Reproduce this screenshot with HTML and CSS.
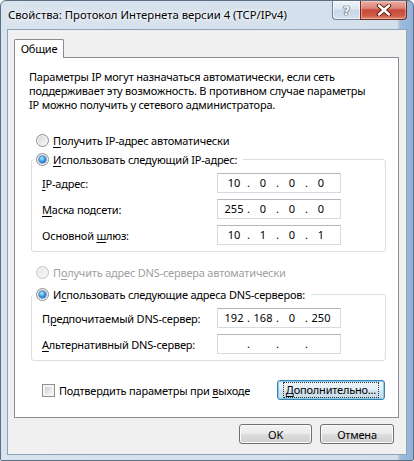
FILE: index.html
```html
<!DOCTYPE html>
<html lang="ru">
<head>
<meta charset="utf-8">
<title>Свойства: Протокол Интернета версии 4 (TCP/IPv4)</title>
<link rel="stylesheet" href="styles.css">
</head>
<body>
<div class="window">
  <div class="titlebar">
    <div class="title">Свойства: Протокол Интернета версии 4 (TCP/IPv4)</div>
    <div class="caption-buttons">
      <div class="cap-help">?</div>
      <div class="cap-close">
        <svg width="16" height="12" viewBox="0 0 16 12">
          <path d="M3 1.5 L13 10.5 M13 1.5 L3 10.5" stroke="#5a1d14" stroke-width="4.4" stroke-linecap="round"/>
          <path d="M3 1.5 L13 10.5 M13 1.5 L3 10.5" stroke="#ffffff" stroke-width="2.4" stroke-linecap="round"/>
        </svg>
      </div>
    </div>
  </div>
  <div class="client">
    <div class="tabs"><div class="tab">Общие</div></div>
    <div class="panel">
      <p class="intro">Параметры IP могут назначаться автоматически, если сеть<br>поддерживает эту возможность. В противном случае параметры<br>IP можно получить у сетевого администратора.</p>

      <div class="option">
        <span class="rb"></span><span><u>П</u>олучить IP-адрес автоматически</span>
      </div>

      <div class="group group-ip">
        <div class="legend">
          <span class="rb"><span class="rb-dot"></span></span><span><u>И</u>спользовать следующий IP-адрес:</span>
        </div>
        <div class="fields">
          <span class="flabel"><u>I</u>P-адрес:</span>
          <div class="ipbox"><span>10</span><span>.</span><span>0</span><span>.</span><span>0</span><span>.</span><span>0</span></div>
          <span class="flabel"><u>М</u>аска подсети:</span>
          <div class="ipbox"><span>255</span><span>.</span><span>0</span><span>.</span><span>0</span><span>.</span><span>0</span></div>
          <span class="flabel">Основной <u>ш</u>люз:</span>
          <div class="ipbox"><span>10</span><span>.</span><span>1</span><span>.</span><span>0</span><span>.</span><span>1</span></div>
        </div>
      </div>

      <div class="option option-dns disabled">
        <span class="rb"></span><span>П<u>о</u>лучить адрес DNS-сервера автоматически</span>
      </div>

      <div class="group group-dns">
        <div class="legend">
          <span class="rb"><span class="rb-dot"></span></span><span>И<u>с</u>пользовать следующие адреса DNS-серверов:</span>
        </div>
        <div class="fields">
          <span class="flabel">П<u>р</u>едпочитаемый DNS-сервер:</span>
          <div class="ipbox"><span>192</span><span>.</span><span>168</span><span>.</span><span>0</span><span>.</span><span>250</span></div>
          <span class="flabel"><u>А</u>льтернативный DNS-сервер:</span>
          <div class="ipbox"><span></span><span>.</span><span></span><span>.</span><span></span><span>.</span><span></span></div>
        </div>
      </div>

      <div class="panel-footer">
        <div class="check-row"><span class="cb"><span class="cb-in"></span></span><span>Подтвердить параметры при <u>в</u>ыходе</span></div>
        <div class="btn btn-focus btn-adv"><span class="focus-rect"><u>Д</u>ополнительно...</span></div>
      </div>
    </div>
    <div class="dialog-buttons">
      <div class="btn btn-ok">OK</div>
      <div class="btn btn-cancel">Отмена</div>
    </div>
  </div>
</div>
</body>
</html>
```
FILE: styles.css
```css
* { box-sizing: border-box; }

body {
  margin: 0;
  background: #ffffff;
  font-family: "Noto Sans", "Open Sans", sans-serif;
  font-size: 11px;
  letter-spacing: -0.2px;
  color: #000;
}

u { text-decoration: underline; text-underline-offset: 2px; }

.window {
  width: 414px;
  height: 461px;
  display: flex;
  flex-direction: column;
  padding: 0 6px 5px 6px;
  border: 1px solid #5c6e82;
  border-radius: 6px 6px 2px 2px;
  background: linear-gradient(90deg, #d9e3ee 0, #d3dfeb 396px, #9dbcdc 399px, #8fb2d8 412px);
}

.titlebar {
  height: 28px;
  display: flex;
  justify-content: space-between;
  align-items: flex-start;
}

.title {
  padding: 6px 0 0 1px;
  line-height: 16px;
  font-size: 11.3px;
  letter-spacing: 0;
  white-space: nowrap;
  color: #000;
  text-shadow: 0 0 6px #ffffff, 0 0 3px #ffffff;
}

.caption-buttons {
  display: flex;
  height: 19px;
}

.cap-help {
  width: 28px;
  height: 19px;
  border: 1px solid #71849a;
  border-top: none;
  border-right: none;
  border-radius: 0 0 0 4px;
  background: linear-gradient(#eef3f9 0%, #dde7f2 45%, #c9d7e6 50%, #d4e1ee 100%);
  box-shadow: inset 0 0 0 1px rgba(255,255,255,0.6);
  display: flex;
  align-items: center;
  justify-content: center;
  font-family: "DejaVu Sans", sans-serif;
  font-weight: bold;
  font-size: 13px;
  letter-spacing: 0;
  color: #f6f8fb;
  text-shadow: 0 0 1px #3e4d60, 0 0 1px #3e4d60, 0 0 1px #3e4d60;
}

.cap-close {
  width: 47px;
  height: 19px;
  border: 1px solid #6b2a22;
  border-top: none;
  border-radius: 0 0 4px 0;
  background: linear-gradient(#eab0a6 0%, #dc8476 40%, #c8493a 50%, #cf5a43 80%, #dd8a6f 100%);
  box-shadow: inset 0 0 0 1px rgba(255,220,210,0.45);
  display: flex;
  align-items: center;
  justify-content: center;
}

.client {
  flex: 1;
  border: 1px solid #8ea2b8;
  background: #f0f0f0;
  padding: 9px 6px 0 6px;
  display: flex;
  flex-direction: column;
}

.tabs {
  display: flex;
}

.tab {
  position: relative;
  z-index: 1;
  width: 50px;
  height: 19px;
  margin-bottom: -1px;
  border: 1px solid #898c95;
  border-bottom: none;
  border-radius: 2px 2px 0 0;
  background: #ffffff;
  text-align: center;
  line-height: 18px;
}

.panel {
  height: 361px;
  margin-right: 1px;
  border: 1px solid #898c95;
  background: #ffffff;
  display: flex;
  flex-direction: column;
}

.intro {
  margin: 12px 0 0 14px;
  line-height: 14px;
  white-space: nowrap;
}

.option {
  display: flex;
  align-items: center;
  gap: 4px;
  height: 14px;
  margin: 21px 0 0 21px;
  white-space: nowrap;
}

.option.disabled { color: #a0a0a0; }

.option-dns { margin-top: 13px; }

.rb {
  width: 13px;
  height: 13px;
  flex: none;
  border-radius: 50%;
  border: 1px solid #8e8f8f;
  background: linear-gradient(135deg, #cfcfcf 0%, #e8e8e8 50%, #fbfbfb 100%);
  box-shadow: inset 0 0 0 1px #f4f4f4;
  display: flex;
  align-items: center;
  justify-content: center;
}

.disabled .rb {
  border-color: #c4c4c4;
  background: linear-gradient(135deg, #e6e6e6, #f7f7f7);
}

.rb-dot {
  width: 7px;
  height: 7px;
  border-radius: 50%;
  background: radial-gradient(circle at 40% 35%, #b5ecff 0%, #3e9ee8 45%, #10479c 100%);
  box-shadow: 0 0 0 0.5px #1a4f9a;
}

.group {
  margin: 12px 12px 0 16px;
  border: 1px solid #d5dfe5;
  border-radius: 3px;
  padding: 0 0 6px 10px;
}

.group-dns { margin-top: 15px; }

.legend {
  display: flex;
  align-items: center;
  gap: 4px;
  width: fit-content;
  height: 14px;
  margin: -8px 0 0 -9px;
  padding: 0 6px 0 3px;
  background: #ffffff;
  white-space: nowrap;
}

.fields {
  display: grid;
  grid-template-columns: 175px 124px;
  grid-auto-rows: 20px;
  row-gap: 6px;
  margin-top: 7px;
  align-items: center;
}

.flabel { white-space: nowrap; }

.ipbox {
  height: 20px;
  border: 1px solid #d7dadf;
  border-top-color: #b3b6bc;
  background: #fff;
  display: grid;
  grid-template-columns: 24px 5px 24px 5px 24px 5px 24px;
  padding-left: 4px;
  align-items: center;
  text-align: center;
  line-height: 16px;
  letter-spacing: 0;
}

.panel-footer {
  display: flex;
  align-items: center;
  justify-content: space-between;
  margin: 19px 13px 0 27px;
  height: 20px;
}

.check-row {
  display: flex;
  align-items: center;
  gap: 4px;
  white-space: nowrap;
}

.cb {
  width: 13px;
  height: 13px;
  border: 1px solid #8e8f8f;
  background: #f4f4f4;
  padding: 2px;
  display: flex;
}

.cb-in {
  flex: 1;
  background: linear-gradient(135deg, #cbcfd5 0%, #e3e5e8 55%, #f6f6f6 100%);
}

.btn {
  height: 20px;
  border: 1px solid #707070;
  border-radius: 3px;
  background: linear-gradient(#f2f2f2 0%, #ebebeb 49%, #dddddd 51%, #cfcfcf 100%);
  box-shadow: inset 0 0 0 1px #fbfbfb;
  display: flex;
  align-items: center;
  justify-content: center;
  white-space: nowrap;
}

.btn-adv { width: 108px; }

.btn-focus {
  border-color: #3c7fb1;
  background: linear-gradient(#eef5f9 0%, #e3eef5 49%, #d5e4ee 51%, #c9dbe7 100%);
  box-shadow: inset 0 0 0 1px #7fd1ea;
}

.focus-rect {
  outline: 1px dotted #333;
  outline-offset: 0;
  padding: 0 2px;
  line-height: 14px;
}

.dialog-buttons {
  display: flex;
  justify-content: flex-end;
  gap: 8px;
  margin-top: 6px;
  padding-right: 6px;
}

.btn-ok { width: 73px; }
.btn-cancel { width: 74px; }
```
